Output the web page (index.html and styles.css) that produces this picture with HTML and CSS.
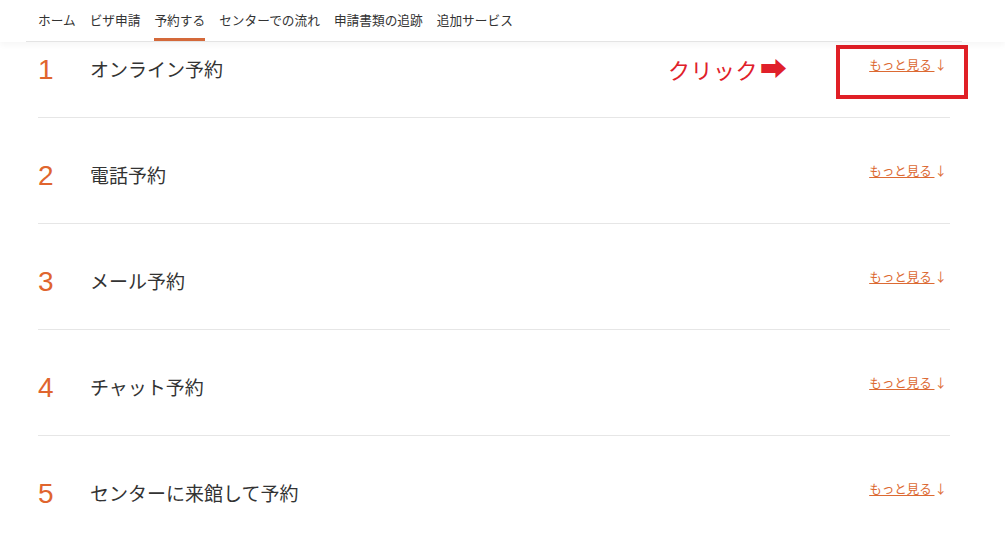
FILE: index.html
```html
<!DOCTYPE html>
<html lang="ja">
<head>
    <meta charset="UTF-8">
    <meta name="viewport" content="width=device-width, initial-scale=1.0">
    <title>予約する</title>
    <link rel="stylesheet" href="styles.css">
</head>
<body>
    <header class="topbar">
        <nav class="nav">
            <a href="#" class="nav-item">ホーム</a>
            <a href="#" class="nav-item">ビザ申請</a>
            <a href="#" class="nav-item active">予約する</a>
            <a href="#" class="nav-item">センターでの流れ</a>
            <a href="#" class="nav-item">申請書類の追跡</a>
            <a href="#" class="nav-item">追加サービス</a>
        </nav>
    </header>

    <div class="list">
        <div class="row first">
            <span class="num">1</span>
            <span class="title">オンライン予約</span>
            <a href="#" class="more"><u>もっと見る </u> ↓</a>
            <!-- 注釈 -->
            <span class="note">クリック<span class="note-arrow">➡</span></span>
            <span class="note-box"></span>
        </div>
        <div class="row">
            <span class="num">2</span>
            <span class="title">電話予約</span>
            <a href="#" class="more"><u>もっと見る </u> ↓</a>
        </div>
        <div class="row">
            <span class="num">3</span>
            <span class="title">メール予約</span>
            <a href="#" class="more"><u>もっと見る </u> ↓</a>
        </div>
        <div class="row">
            <span class="num">4</span>
            <span class="title">チャット予約</span>
            <a href="#" class="more"><u>もっと見る </u> ↓</a>
        </div>
        <div class="row last">
            <span class="num">5</span>
            <span class="title">センターに来館して予約</span>
            <a href="#" class="more"><u>もっと見る </u> ↓</a>
        </div>
    </div>
</body>
</html>
```

FILE: styles.css
```css
body {
    font-family: "Noto Sans CJK JP", "Liberation Sans", sans-serif;
    margin: 0;
    padding: 0;
    background-color: white;
    color: #333;
    overflow: hidden;
}

.topbar {
    position: relative;
    z-index: 2;
    background-color: white;
    box-shadow: 0 3px 6px rgba(0, 0, 0, 0.04);
}

.nav {
    display: flex;
    gap: 14px;
    margin: 0 43px 0 26px;
    padding-left: 12px;
    border-bottom: 1px solid #e4e4e4;
}

.nav-item {
    font-size: 12.7px;
    line-height: 18px;
    padding: 11px 0 9px;
    border-bottom: 3px solid transparent;
    color: #333;
    text-decoration: none;
}

.nav-item.active {
    border-bottom-color: #d4693a;
}

.list {
    padding: 0 55px 0 38px;
}

.row {
    position: relative;
    display: flex;
    align-items: center;
    height: 30px;
    padding: 43px 0 32px;
    border-bottom: 1px solid #e6e6e6;
}

.row.first {
    padding-top: 13px;
}

.row.last {
    border-bottom: none;
}

.num {
    width: 52px;
    font-family: "Liberation Sans", Arial, sans-serif;
    font-size: 28px;
    color: #e0652e;
}

.title {
    flex: 1;
    font-size: 19px;
    color: #333;
    margin-bottom: 4px;
}

.more {
    font-size: 12.5px;
    color: #dc6a33;
    text-decoration: none;
    margin: 0 3px 12px 0;
}

.note {
    position: absolute;
    left: 630px;
    top: 6px;
    font-size: 22px;
    color: #e0202a;
    letter-spacing: 0.5px;
}

.note-arrow {
    font-size: 27px;
    margin-left: 2px;
}

.note-box {
    position: absolute;
    left: 798px;
    top: 3px;
    width: 124px;
    height: 46px;
    border: 4px solid #e01f26;
}
```
